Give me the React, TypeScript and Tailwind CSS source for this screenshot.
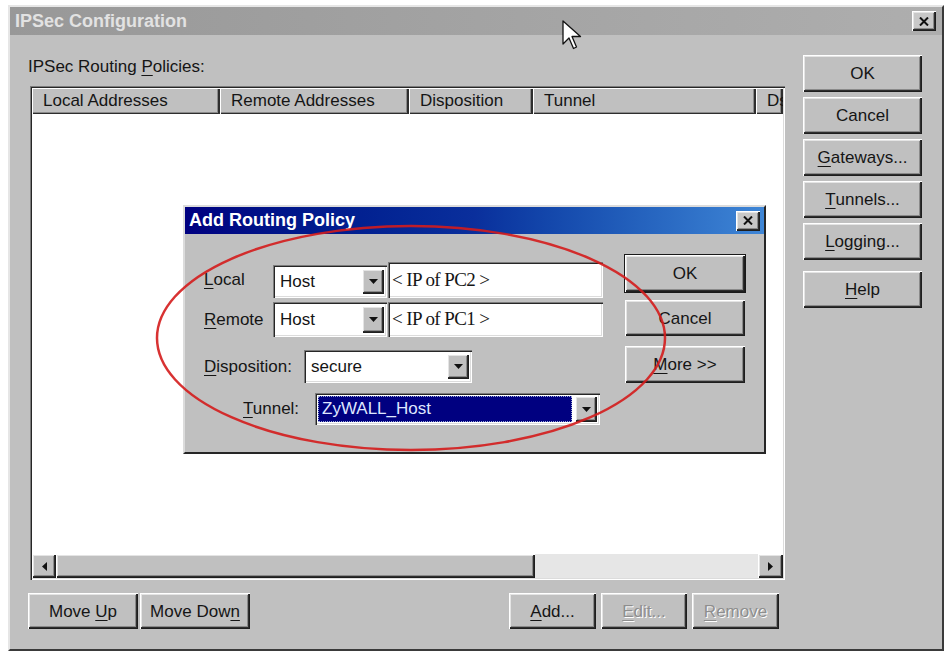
import type { ReactNode } from "react";

const RAISED =
  "shadow-[inset_1px_1px_0_#ffffff,inset_-1px_-1px_0_#1e1e1e,inset_-2px_-2px_0_#2e2e2e,inset_2px_2px_0_#e4e4e4,inset_-3px_-3px_0_#8a8a8a]";
const SUNKEN =
  "shadow-[inset_1px_1px_0_#7c7c7c,inset_2px_2px_0_#262626,inset_-1px_-1px_0_#ffffff,inset_-2px_-2px_0_#dcdcdc]";

function U({ children }: { children: ReactNode }) {
  return <span className="underline underline-offset-[3px] decoration-1">{children}</span>;
}

function Btn({
  children,
  className = "",
  disabled = false,
  isDefault = false,
}: {
  children: ReactNode;
  className?: string;
  disabled?: boolean;
  isDefault?: boolean;
}) {
  return (
    <div
      className={`flex items-center justify-center bg-[#c0c0c0] text-[17px] leading-none ${RAISED} ${
        disabled ? "text-[#8e8e8e] [text-shadow:1px_1px_0_#ffffff]" : "text-[#151515]"
      } ${isDefault ? "outline outline-1 outline-[#1a1a1a]" : ""} ${className}`}
    >
      {children}
    </div>
  );
}

function DownArrow() {
  return (
    <svg width="9" height="5" viewBox="0 0 9 5">
      <path d="M0 0h9L4.5 5z" fill="#111" />
    </svg>
  );
}

function DropBtn({ className = "" }: { className?: string }) {
  return (
    <div className={`flex items-center justify-center bg-[#c0c0c0] w-[22px] ${RAISED} ${className}`}>
      <DownArrow />
    </div>
  );
}

function Combo({
  value,
  width,
  height,
}: {
  value: string;
  width: string;
  height: string;
}) {
  return (
    <div className={`flex items-center bg-white ${SUNKEN} ${width} ${height} pl-[7px] pr-[3px] py-[4px]`}>
      <span className="flex-1 text-[17px] text-[#151515]">{value}</span>
      <DropBtn className="h-full" />
    </div>
  );
}

function IpField({ value, height }: { value: string; height: string }) {
  return (
    <div className={`ml-[1px] flex items-center w-[215px] ${height} bg-white ${SUNKEN} pl-[4px]`}>
      <span className="font-['Liberation_Serif','Times_New_Roman',serif] text-[19px] tracking-[-0.6px] text-[#151515]">
        {value}
      </span>
    </div>
  );
}

const COLUMNS = [
  { label: "Local Addresses", w: "w-[188px]" },
  { label: "Remote Addresses", w: "w-[189px]" },
  { label: "Disposition", w: "w-[124px]" },
  { label: "Tunnel", w: "w-[223px]" },
  { label: "Ds", w: "flex-1" },
];

export default function App() {
  return (
    <div className="relative w-[949px] h-[654px] overflow-hidden bg-white pl-[8px] pt-[5px] font-['Liberation_Sans',Arial,sans-serif]">
      {/* IPSec Configuration window */}
      <div className="flex flex-col w-[936px] h-[646px] bg-[#c0c0c0] border-2 border-t-[#e6e6e6] border-l-[#e6e6e6] border-r-[#3a3a3a] border-b-[#3a3a3a]">
        <div className="flex items-center justify-between h-[28px] bg-gradient-to-r from-[#989898] to-[#aeaeae] pl-[5px] pr-[6px]">
          <span className="text-[18px] font-bold text-[#e2e2e2]">IPSec Configuration</span>
          <div className={`flex items-center justify-center w-[24px] h-[20px] bg-[#c8c8c8] ${RAISED}`}>
            <svg width="10" height="9" viewBox="0 0 10 9">
              <path d="M1 0.5l8 8M9 0.5l-8 8" stroke="#111" strokeWidth="2" />
            </svg>
          </div>
        </div>

        <div className="flex items-start pl-[18px]">
          {/* left column */}
          <div className="flex flex-col w-[757px] pt-[22px]">
            <div className="h-[20px] text-[17px] leading-[20px] text-[#151515]">
              IPSec Routing <U>P</U>olicies:
            </div>
            <div className={`mt-[9px] ml-[2px] flex flex-col w-[755px] h-[494px] bg-white p-[2px] ${SUNKEN}`}>
              <div className="flex h-[26px]">
                {COLUMNS.map((c) => (
                  <div
                    key={c.label}
                    className={`${c.w} flex items-center overflow-hidden whitespace-nowrap bg-[#c0c0c0] pl-[11px] text-[17px] text-[#151515] shadow-[inset_1px_1px_0_#ffffff,inset_-2px_-1px_0_#2e2e2e,inset_-3px_-2px_0_#8a8a8a]`}
                  >
                    {c.label}
                  </div>
                ))}
              </div>
              <div className="flex-1 bg-white" />
              <div className="flex h-[24px]">
                <div className={`flex items-center justify-center w-[24px] bg-[#c0c0c0] ${RAISED}`}>
                  <svg width="5" height="9" viewBox="0 0 5 9">
                    <path d="M5 0v9L0 4.5z" fill="#111" />
                  </svg>
                </div>
                <div className={`w-[479px] bg-[#c0c0c0] ${RAISED}`} />
                <div className="flex-1 bg-[#e6e6e6]" />
                <div className={`flex items-center justify-center w-[25px] bg-[#c0c0c0] ${RAISED}`}>
                  <svg width="5" height="9" viewBox="0 0 5 9">
                    <path d="M0 0v9l5-4.5z" fill="#111" />
                  </svg>
                </div>
              </div>
            </div>
            <div className="mt-[13px] flex h-[36px] pr-[6px]">
              <Btn className="w-[110px]">
                Move&nbsp;<U>U</U>p
              </Btn>
              <Btn className="ml-[2px] w-[110px]">
                Move Dow<U>n</U>
              </Btn>
              <div className="flex-1" />
              <Btn className="w-[87px]">
                <U>A</U>dd...
              </Btn>
              <Btn className="ml-[5px] w-[86px]" disabled>
                <U>E</U>dit...
              </Btn>
              <Btn className="ml-[5px] w-[87px]" disabled>
                <U>R</U>emove
              </Btn>
            </div>
          </div>

          {/* right column */}
          <div className="ml-[18px] flex flex-col w-[119px] pt-[20px] gap-[5px]">
            <Btn className="h-[37px]">OK</Btn>
            <Btn className="h-[37px]">Cancel</Btn>
            <Btn className="h-[37px]">
              <U>G</U>ateways...
            </Btn>
            <Btn className="h-[37px]">
              <U>T</U>unnels...
            </Btn>
            <Btn className="h-[37px]">
              <U>L</U>ogging...
            </Btn>
            <Btn className="mt-[6px] h-[37px]">
              <U>H</U>elp
            </Btn>
          </div>
        </div>
      </div>

      {/* Add Routing Policy dialog */}
      <div className="absolute left-[183px] top-[205px] flex flex-col w-[583px] h-[249px] bg-[#c0c0c0] border-2 border-t-[#dcdcdc] border-l-[#dcdcdc] border-r-[#262626] border-b-[#262626]">
        <div className="flex items-center justify-between h-[27px] bg-gradient-to-r from-[#000080] via-[#0a2f9c] to-[#3f86d6] pl-[4px] pr-[4px]">
          <span className="text-[18px] font-bold text-white">Add Routing Policy</span>
          <div className={`flex items-center justify-center w-[24px] h-[20px] bg-[#c8c8c8] ${RAISED}`}>
            <svg width="10" height="9" viewBox="0 0 10 9">
              <path d="M1 0.5l8 8M9 0.5l-8 8" stroke="#111" strokeWidth="2" />
            </svg>
          </div>
        </div>
        <div className="flex items-start pl-[19px] pt-[21px]">
          <div className="mt-[7px] flex flex-col text-[17px] text-[#151515]">
            <div className="flex items-center h-[36px]">
              <span className="w-[69px]">
                <U>L</U>ocal
              </span>
              <div className="self-end">
                <Combo value="Host" width="w-[114px]" height="h-[33px]" />
              </div>
              <IpField value="< IP of PC2 >" height="h-[36px]" />
            </div>
            <div className="mt-[4px] flex items-center h-[35px]">
              <span className="w-[69px]">
                <U>R</U>emote
              </span>
              <Combo value="Host" width="w-[114px]" height="h-[35px]" />
              <IpField value="< IP of PC1 >" height="h-[35px]" />
            </div>
            <div className="mt-[13px] flex items-center h-[33px]">
              <span className="w-[100px]">
                <U>D</U>isposition:
              </span>
              <Combo value="secure" width="w-[168px]" height="h-[33px]" />
            </div>
            <div className="mt-[10px] flex items-center h-[32px]">
              <span className="w-[111px] pl-[39px]">
                <U>T</U>unnel:
              </span>
              <div className={`flex items-center w-[285px] h-[32px] bg-white ${SUNKEN} p-[3px] pr-[3px]`}>
                <div className="flex flex-1 items-center h-full bg-[#000080] pl-[4px] outline outline-1 outline-dotted outline-[#9aa6d8] -outline-offset-1">
                  <span className="text-[17px] text-[#dfe6ff]">ZyWALL_Host</span>
                </div>
                <DropBtn className="ml-[3px] h-full" />
              </div>
            </div>
          </div>
          <div className="ml-[22px] flex flex-col w-[120px]">
            <Btn className="h-[37px]" isDefault>
              OK
            </Btn>
            <Btn className="mt-[8px] h-[36px]">Cancel</Btn>
            <Btn className="mt-[10px] h-[37px]">
              <U>M</U>ore &gt;&gt;
            </Btn>
          </div>
        </div>
      </div>

      {/* red marker ellipse */}
      <svg className="pointer-events-none absolute left-0 top-0" width="949" height="654">
        <ellipse cx="411" cy="338" rx="254" ry="112" fill="none" stroke="#d41c1c" strokeWidth="2.5" opacity="0.9" />
      </svg>

      {/* mouse cursor */}
      <svg className="pointer-events-none absolute left-[562px] top-[20px]" width="20" height="31" viewBox="0 0 20 31">
        <path
          d="M1 1v23l6-6 4.5 10.5 3-1.5-4.5-10.5h8.5z"
          fill="#fff"
          stroke="#111"
          strokeWidth="1.3"
          strokeLinejoin="round"
        />
      </svg>
    </div>
  );
}
